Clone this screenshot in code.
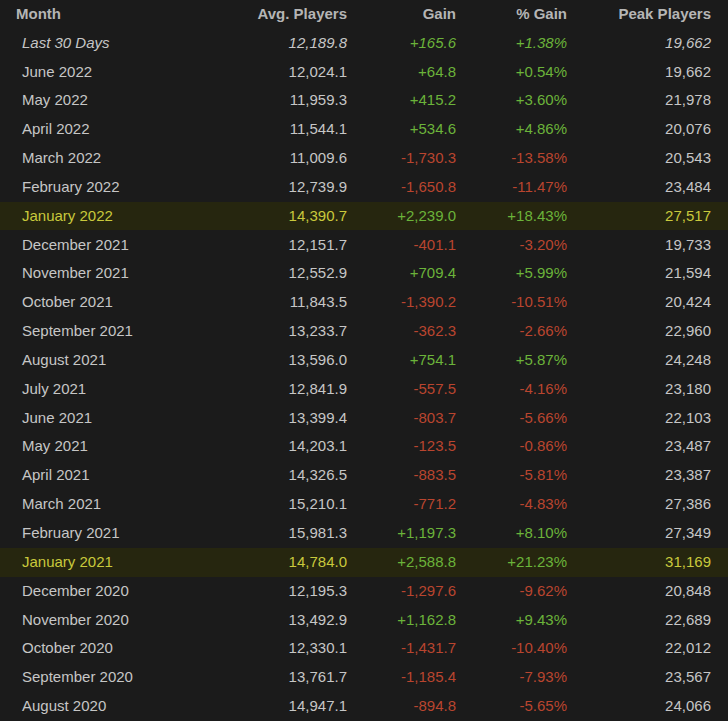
const rows: [string, string, string, string, string, boolean?][] = [
["June 2022","12,024.1","+64.8","+0.54%","19,662"],
["May 2022","11,959.3","+415.2","+3.60%","21,978"],
["April 2022","11,544.1","+534.6","+4.86%","20,076"],
["March 2022","11,009.6","-1,730.3","-13.58%","20,543"],
["February 2022","12,739.9","-1,650.8","-11.47%","23,484"],
["January 2022","14,390.7","+2,239.0","+18.43%","27,517",true],
["December 2021","12,151.7","-401.1","-3.20%","19,733"],
["November 2021","12,552.9","+709.4","+5.99%","21,594"],
["October 2021","11,843.5","-1,390.2","-10.51%","20,424"],
["September 2021","13,233.7","-362.3","-2.66%","22,960"],
["August 2021","13,596.0","+754.1","+5.87%","24,248"],
["July 2021","12,841.9","-557.5","-4.16%","23,180"],
["June 2021","13,399.4","-803.7","-5.66%","22,103"],
["May 2021","14,203.1","-123.5","-0.86%","23,487"],
["April 2021","14,326.5","-883.5","-5.81%","23,387"],
["March 2021","15,210.1","-771.2","-4.83%","27,386"],
["February 2021","15,981.3","+1,197.3","+8.10%","27,349"],
["January 2021","14,784.0","+2,588.8","+21.23%","31,169",true],
["December 2020","12,195.3","-1,297.6","-9.62%","20,848"],
["November 2020","13,492.9","+1,162.8","+9.43%","22,689"],
["October 2020","12,330.1","-1,431.7","-10.40%","22,012"],
["September 2020","13,761.7","-1,185.4","-7.93%","23,567"],
["August 2020","14,947.1","-894.8","-5.65%","24,066"],
];
const cols = "grid grid-cols-[200px_147px_109px_111px_144px] items-center";
export default function App() {
  return (
    <div className="w-[728px] h-[721px] bg-[#1b1b1b] text-[#c6c6c6] text-[15px] overflow-hidden" style={{fontFamily:'"Liberation Sans", Arial, sans-serif'}}>
      <div className={`${cols} h-[28.5px] font-bold text-[#b5b5b5]`}>
        <div className="pl-[16px]">Month</div>
        <div className="text-right">Avg. Players</div>
        <div className="text-right">Gain</div>
        <div className="text-right">% Gain</div>
        <div className="text-right">Peak Players</div>
      </div>
      <div className={`${cols} h-[28.85px] italic`}>
        <div className="pl-[22px]">Last 30 Days</div>
        <div className="text-right">12,189.8</div>
        <div className="text-right text-[#6bb33a]">+165.6</div>
        <div className="text-right text-[#6bb33a]">+1.38%</div>
        <div className="text-right">19,662</div>
      </div>
      {rows.map(([m,a,g,p,pk,hl]) => {
        const c = g.startsWith("+") ? "text-[#6bb33a]" : "text-[#b9452f]";
        return (
          <div key={m} className={`${cols} h-[28.85px] ${hl ? "bg-[#26260f] text-[#c9c93c]" : ""}`}>
            <div className="pl-[22px]">{m}</div>
            <div className="text-right">{a}</div>
            <div className={`text-right ${c}`}>{g}</div>
            <div className={`text-right ${c}`}>{p}</div>
            <div className="text-right">{pk}</div>
          </div>
        );
      })}
    </div>
  );
}
